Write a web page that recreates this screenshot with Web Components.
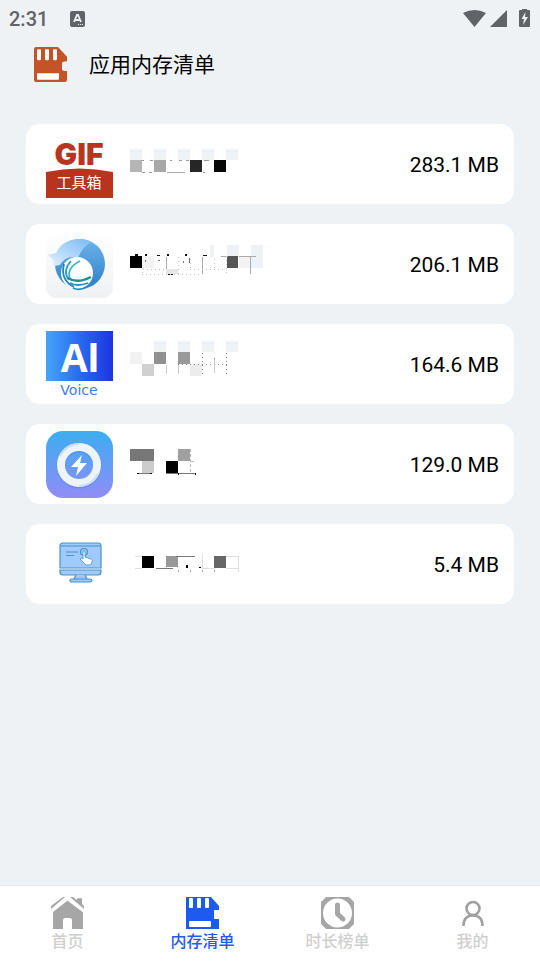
<!DOCTYPE html>
<html lang="zh-CN">
<head>
<meta charset="utf-8">
<meta name="viewport" content="width=device-width, initial-scale=1">
<title>应用内存清单</title>
<style>
  :root {
    --page: #eef2f5;
    --status: #606367;
    --accent: #c45427;
    --primary: #1f5af0;
    --muted: #cfcfcf;
  }
  html, body { margin: 0; }
  body {
    min-height: 100vh;
    display: flex;
    flex-direction: column;
    background: var(--page);
    color: #000;
    font-family: Roboto, "Noto Sans CJK SC", sans-serif;
  }
  memory-list { flex: 1; }
</style>
</head>
<body>

<status-bar time="2:31"></status-bar>
<page-title><memory-card-icon slot="icon"></memory-card-icon>应用内存清单</page-title>

<memory-list>
  <app-row size="283.1 MB">
    <svg slot="icon" viewBox="0 0 67 67" aria-hidden="true">
      <text x="33" y="34" text-anchor="middle" font-family="Inter, sans-serif" font-weight="900" font-size="30" fill="#b8351f">GIF</text>
      <path d="M0 41Q33 34 67 41V67H0Z" fill="#b9341e"/>
      <text x="33" y="57" text-anchor="middle" font-family="'Noto Sans CJK SC', sans-serif" font-size="15" fill="#fff">工具箱</text>
    </svg>
    <svg slot="name" viewBox="0 0 140 67" shape-rendering="crispEdges" aria-hidden="true">
      <path d="M0 18h12v11H0zM24 18h12v11H24zM48 18h12v11H48zM72 18h12v11H72zM96 18h12v11H96z" fill="#eef1f5"/>
      <path d="M0 29h12v12H0z" fill="#b5b5b5"/><path d="M24 29h12v12H24z" fill="#a8a8a8"/>
      <path d="M60 29h12v12H60z" fill="#262626"/><path d="M84 29h12v12H84z" fill="#080808"/>
      <path d="M12 29.500h2M20 29.500h3M40 29.500h2M49 29.500h3M56 29.500h3M74 29.500h5M12 41.500h3M19 41.500h3M73 41.500h2" stroke="#999" fill="none"/>
      <path d="M37 41.500h18" stroke="#aaa"/>
    </svg>
  </app-row>

  <app-row size="206.1 MB">
    <svg slot="icon" viewBox="0 0 67 67" aria-hidden="true">
      <defs>
        <linearGradient id="tile" x2="0" y2="1"><stop stop-color="#fff"/><stop offset="1" stop-color="#f0f1f2"/></linearGradient>
        <linearGradient id="ball" x2="0" y2="1"><stop stop-color="#6fb3ea"/><stop offset="1" stop-color="#2b80c9"/></linearGradient>
        <linearGradient id="wing" y1="1" x2="1" y2="0"><stop stop-color="#e4f3ff"/><stop offset="1" stop-color="#78b9f5"/></linearGradient>
      </defs>
      <rect width="67" height="67" rx="10" fill="url(#tile)"/>
      <circle cx="34" cy="33" r="25" fill="url(#ball)"/>
      <path d="M46 11C38 15 35 20 32 27C23 24 17 29 14 34L8 35L7 29L2 24L10 22C16 8 34 5 46 11Z" fill="url(#wing)"/>
      <circle cx="31" cy="42" r="16" fill="#fff"/>
      <g fill="none" stroke-width="1.800">
        <path d="M18 33Q14 49 28 56" stroke="#2086b8"/>
        <path d="M25 30Q16 40 23 49" stroke="#2b9bd0"/>
        <path d="M34 30Q20 37 24 48" stroke="#3fb7c9"/>
        <path d="M22 47Q31 53 45 46" stroke="#1f8f8c" stroke-width="2.500"/>
        <path d="M24 52Q31 56 42 52" stroke="#2490be"/>
        <path d="M27 57Q33 60 41 56" stroke="#2490be"/>
      </g>
    </svg>
    <svg slot="name" viewBox="0 0 140 67" shape-rendering="crispEdges" aria-hidden="true">
      <path d="M80 14h4v12h-4zM97 14h12v12H97zM121 14h12v23h-12z" fill="#eff2f5"/>
      <path d="M12 25h12v12H12zM109 25h12v12h-12z" fill="#f3f3f3"/>
      <path d="M36 38h12v5H36z" fill="#e6e6e6"/>
      <path d="M0 25h12v12H0z"/><path d="M97 25h11v12H97z" fill="#555"/>
      <path d="M5 23h3v2H5zM15 23h2v2h-2zM27 24h3v1h-3zM37 23h2v2h-2zM55 23h2v2h-2zM73 24h4v1h-4zM38 43h5v1h-5z" fill="#111"/>
      <path d="M91 25.500h7M109 25.500h17M36.500 26v12M72.500 26v17M120.500 26v17" stroke="#aaa"/>
      <path d="M12.500 37v7M48.500 26v17M60.500 28v10M84.500 28v10M96.500 25v17M13 38.500h24M60 38.500h36M12 43.500h60" stroke="#c4c4c4" stroke-dasharray="1 3"/>
      <path d="M15 29h1v2h-1zM28 29h2v1h-2zM53 30h1v2h-1zM59 27h1v5h-1z" fill="#777"/>
    </svg>
  </app-row>

  <app-row size="164.6 MB">
    <svg slot="icon" viewBox="0 0 67 67" aria-hidden="true">
      <defs><linearGradient id="blue" x2="1" y2="0"><stop stop-color="#45a4f8"/><stop offset=".55" stop-color="#2666ee"/><stop offset="1" stop-color="#1d34e0"/></linearGradient></defs>
      <rect width="67" height="50" fill="url(#blue)"/>
      <text x="34" y="41" text-anchor="middle" font-family="'Open Sans', sans-serif" font-weight="700" font-size="39" fill="#fff"><tspan>A</tspan><tspan font-family="Lato, sans-serif" font-weight="900">I</tspan></text>
      <text x="33" y="64" text-anchor="middle" font-family="'DejaVu Sans', sans-serif" font-size="14" fill="#397ff0">Voice</text>
    </svg>
    <svg slot="name" viewBox="0 0 140 67" shape-rendering="crispEdges" aria-hidden="true">
      <path d="M24 10h12v11H24zM48 10h12v11H48zM72 10h12v11H72zM96 10h12v11H96z" fill="#eef1f5"/>
      <path d="M0 21h12v12H0z" fill="#f2f2f2"/><path d="M24 21h12v12H24z" fill="#909090"/>
      <path d="M48 21h12v12H48z" fill="#999"/><path d="M12 33h12v12H12z" fill="#d0d0d0"/><path d="M60 33h12v12H60z" fill="#ececec"/>
      <path d="M48 33.500h50M72.500 22v22M84.500 27v15M96.500 22v22" stroke="#888" stroke-dasharray="1 3"/>
      <path d="M84.500 28v14M36.500 34v9M48.500 34v9" stroke="#ccc"/>
    </svg>
  </app-row>

  <app-row size="129.0 MB">
    <svg slot="icon" viewBox="0 0 67 67" aria-hidden="true">
      <defs><linearGradient id="sky" x2="0" y2="1"><stop stop-color="#3caef0"/><stop offset=".5" stop-color="#659cf5"/><stop offset="1" stop-color="#928cf8"/></linearGradient></defs>
      <rect width="67" height="67" rx="17" fill="url(#sky)"/>
      <circle cx="33" cy="35" r="18" fill="none" stroke="#4d78dc" stroke-opacity=".35" stroke-width="9"/>
      <circle cx="33" cy="34" r="18" fill="none" stroke="#edf5fa" stroke-width="8"/>
      <path d="M14 25A21 21 0 0 1 33 13M52 43A21 21 0 0 1 33 55" fill="none" stroke="#c9def8" stroke-width="2"/>
      <path d="M36 24L25 36H32L30 45L41 32H34Z" fill="#fff"/>
    </svg>
    <svg slot="name" viewBox="0 0 140 67" shape-rendering="crispEdges" aria-hidden="true">
      <path d="M0 18h24v12H0z" fill="#777"/><path d="M12 30h12v12H12z" fill="#ccc"/>
      <path d="M48 18h12v12H48z" fill="#a0a0a0"/><path d="M36 30h12v12H36z"/>
      <path d="M7 42.500h15M36 42.500h30" stroke="#777"/>
      <path d="M7 42h2v1H7zM20 42h2v1h-2zM48 42h1v2h-1zM65 42h1v2h-1z"/>
      <path d="M60.500 18v24M61 30.500h5" stroke="#bbb" stroke-dasharray="3 2"/>
    </svg>
  </app-row>

  <app-row size="5.4 MB">
    <svg slot="icon" viewBox="0 0 67 67" aria-hidden="true">
      <g fill="#9fcafc" stroke="#4a90cb" stroke-width="1.200">
        <path d="M14 37V15Q14 12 17 12H52Q55 12 55 15V37Z"/>
        <path d="M14 39H55V41Q55 44 52 44H17Q14 44 14 41Z"/>
        <path d="M30 44L28 48H41L39 44M25 48H44Q46 48 46 49.500Q46 51 44 51H25Q24 51 24 49.500Q24 48 25 48Z"/>
        <path d="M15 15H54M20 21H32M20 24.500H28" fill="none"/>
        <circle cx="38" cy="21" r="3.500"/>
      </g>
      <path d="M37 20Q39 19 39 21V26L45 28Q47 29 46 31Q46 34 43 34H40Q38 32 34 28Q35 26 37 28Z" fill="#fff" stroke="#4a90cb" stroke-width=".8"/>
    </svg>
    <svg slot="name" viewBox="0 0 140 67" shape-rendering="crispEdges" aria-hidden="true">
      <path d="M12 25h12v12H12z"/><path d="M36 25h12v11H36z" fill="#999"/><path d="M84 25h12v12H84z" fill="#666"/>
      <path d="M46 25.500h19M26 37.500h17" stroke="#777"/>
      <path d="M56 34h2v3h-2zM69 36h2v1h-2z"/>
      <path d="M5 25.500h7M5 37.500h7M72.500 23v14M72 37.500h13M96 25.500h13M96 37.500h13M108.500 25v16" stroke="#e0e0e0"/>
      <path d="M48.500 39v2M60.500 39v2M72.500 39v2M84.500 39v2" stroke="#aaa"/>
    </svg>
  </app-row>
</memory-list>

<tab-bar>
  <tab-item label="首页" href="#home">
    <svg viewBox="0 0 33 32" aria-hidden="true">
      <path d="M16.500 3.500L32 15V32H21V23Q21 21 19 21H14Q12 21 12 23V32H2V15Z" fill="#a6a6a6"/>
      <path d="M26 1.500H31V9L26 5Z" fill="#a6a6a6"/>
      <path d="M0 13.500L16.500 1L33 13.500" fill="none" stroke="#fff" stroke-width="4"/>
      <path d="M0 12L14 0H19L33 12V9L31 7V1.500H26V3L22 0H12L0 9Z" fill="#a6a6a6"/>
    </svg>
  </tab-item>
  <tab-item label="内存清单" href="#memory" active>
    <memory-card-icon square></memory-card-icon>
  </tab-item>
  <tab-item label="时长榜单" href="#duration">
    <svg viewBox="0 0 33 32" aria-hidden="true">
      <path d="M5 0H28L33 5V27L28 32H5L0 27V5Z" fill="#a6a6a6"/>
      <circle cx="16.500" cy="16" r="14.500" fill="#fff"/>
      <path d="M16.500 8V17L22 22" fill="none" stroke="#a6a6a6" stroke-width="5" stroke-linecap="round" stroke-linejoin="round"/>
    </svg>
  </tab-item>
  <tab-item label="我的" href="#me">
    <svg viewBox="0 0 33 32" aria-hidden="true">
      <g fill="none" stroke="#a0a0a0" stroke-width="2.600">
        <circle cx="17" cy="11.500" r="6.500"/>
        <path d="M7.500 29Q7.500 18.500 17 18.500Q26.500 18.500 26.500 29"/>
      </g>
    </svg>
  </tab-item>
</tab-bar>

<script>
  // every element below renders plain markup into an open shadow root
  class BaseElement extends HTMLElement {
    constructor() {
      super();
      this.attachShadow({ mode: 'open' });
    }

    connectedCallback() {
      this.shadowRoot.innerHTML = this.template();
    }
  }

  class StatusBar extends BaseElement {
    template() {
      return `
        <style>
          :host {
            display: flex;
            align-items: center;
            height: 37px;
            padding: 0 9px;
            color: var(--status);
            font-size: 20px;
            font-weight: 500;
          }
          svg { display: block; fill: currentColor; }
          .keyboard { margin-left: 22px; }
          .signals { margin-left: auto; }
        </style>
        <span>${this.getAttribute('time')}</span>
        <svg class="keyboard" width="15" height="16" viewBox="0 0 15 16" aria-hidden="true">
          <rect width="15" height="16" rx="2"/>
          <path d="M4 11L7 4H8L11 11M5 9H10" fill="none" stroke="#eef2f5" stroke-width="1.800"/>
          <path d="M8 13h1v1H8zM10 13h1v1h-1zM12 13h1v1h-1z" fill="#eef2f5"/>
        </svg>
        <svg class="signals" width="68" height="20" viewBox="0 -1 68 20" aria-hidden="true">
          <path d="M0 3Q11.500 -3 23 3L11.500 17Z"/>
          <path d="M44 0V17H27Z"/>
          <path d="M59 0V-1H64V0H66Q67 0 67 1V16Q67 17 66 17H57Q56 17 56 16V1Q56 0 57 0Z"/>
          <path d="M62.500 2L58.500 9H61L60 15L65 7H62Z" fill="#eef2f5"/>
        </svg>
      `;
    }
  }

  class MemoryCardIcon extends BaseElement {
    template() {
      // the tab version has square corners
      const body = this.hasAttribute('square')
        ? 'M0 0H25L33 9V13H28V22H33V32H0Z'
        : 'M2 0H24L33 9V13Q28 13 28 15V20Q28 22 33 22V30Q33 32 31 32H2Q0 32 0 30V2Q0 0 2 0Z';
      const top = this.hasAttribute('square') ? 1 : 2;
      return `
        <style>
          :host { display: block; }
          svg { display: block; width: 100%; height: 100%; }
        </style>
        <svg viewBox="0 0 33 32" preserveAspectRatio="none" aria-hidden="true">
          <path d="${body}" fill="currentColor"/>
          <g fill="#fff">
            <rect x="3" y="${top}" width="4" height="10" rx="1"/>
            <rect x="11" y="${top}" width="4" height="10" rx="1"/>
            <rect x="19" y="${top}" width="4" height="10" rx="1"/>
            <rect x="3" y="24" width="22" height="6" rx="1"/>
          </g>
        </svg>
      `;
    }
  }

  class PageTitle extends BaseElement {
    template() {
      return `
        <style>
          :host {
            display: flex;
            align-items: center;
            gap: 22px;
            height: 54px;
            padding: 0 34px;
          }
          h1 {
            margin: 0;
            padding-top: 2px;
            font-size: 21px;
            line-height: 32px;
            font-weight: 400;
          }
          ::slotted([slot="icon"]) {
            width: 33px;
            height: 35px;
            color: var(--accent);
          }
        </style>
        <slot name="icon"></slot>
        <h1><slot></slot></h1>
      `;
    }
  }

  class MemoryList extends BaseElement {
    connectedCallback() {
      super.connectedCallback();
      this.setAttribute('role', 'list');
    }

    template() {
      return `
        <style>
          :host {
            display: flex;
            flex-direction: column;
            gap: 20px;
            padding: 33px 26px 20px;
          }
        </style>
        <slot></slot>
      `;
    }
  }

  class AppRow extends BaseElement {
    connectedCallback() {
      super.connectedCallback();
      this.setAttribute('role', 'listitem');
    }

    template() {
      return `
        <style>
          :host {
            display: flex;
            align-items: center;
            gap: 17px;
            box-sizing: border-box;
            padding: 7px 15px 6px 20px;
            border-radius: 14px;
            background: #fff;
          }
          ::slotted(svg) { display: block; height: 67px; flex: none; }
          ::slotted([slot="icon"]) { width: 67px; }
          ::slotted([slot="name"]) { width: 140px; }
          .size {
            margin-left: auto;
            font-size: 21px;
            line-height: 32px;
            white-space: nowrap;
          }
        </style>
        <slot name="icon"></slot>
        <slot name="name"></slot>
        <span class="size">${this.getAttribute('size')}</span>
      `;
    }
  }

  class TabBar extends BaseElement {
    template() {
      return `
        <style>
          :host { display: block; }
          nav {
            display: grid;
            grid-template-columns: repeat(4, 1fr);
            padding: 11px 0 6px;
            border-top: 1px solid #e4e8eb;
            background: #fff;
          }
        </style>
        <nav><slot></slot></nav>
      `;
    }
  }

  class TabItem extends BaseElement {
    template() {
      return `
        <style>
          :host { display: block; --tab: var(--muted); }
          :host([active]) { --tab: var(--primary); }
          a {
            display: flex;
            flex-direction: column;
            align-items: center;
            color: var(--tab);
            font-size: 16px;
            line-height: 26px;
            font-weight: 500;
            text-decoration: none;
          }
          ::slotted(*) { display: block; width: 33px; height: 32px; }
        </style>
        <a href="${this.getAttribute('href')}" ${this.hasAttribute('active') ? 'aria-current="page"' : ''}>
          <slot></slot>
          <span>${this.getAttribute('label')}</span>
        </a>
      `;
    }
  }

  customElements.define('status-bar', StatusBar);
  customElements.define('memory-card-icon', MemoryCardIcon);
  customElements.define('page-title', PageTitle);
  customElements.define('memory-list', MemoryList);
  customElements.define('app-row', AppRow);
  customElements.define('tab-bar', TabBar);
  customElements.define('tab-item', TabItem);
</script>
</body>
</html>
